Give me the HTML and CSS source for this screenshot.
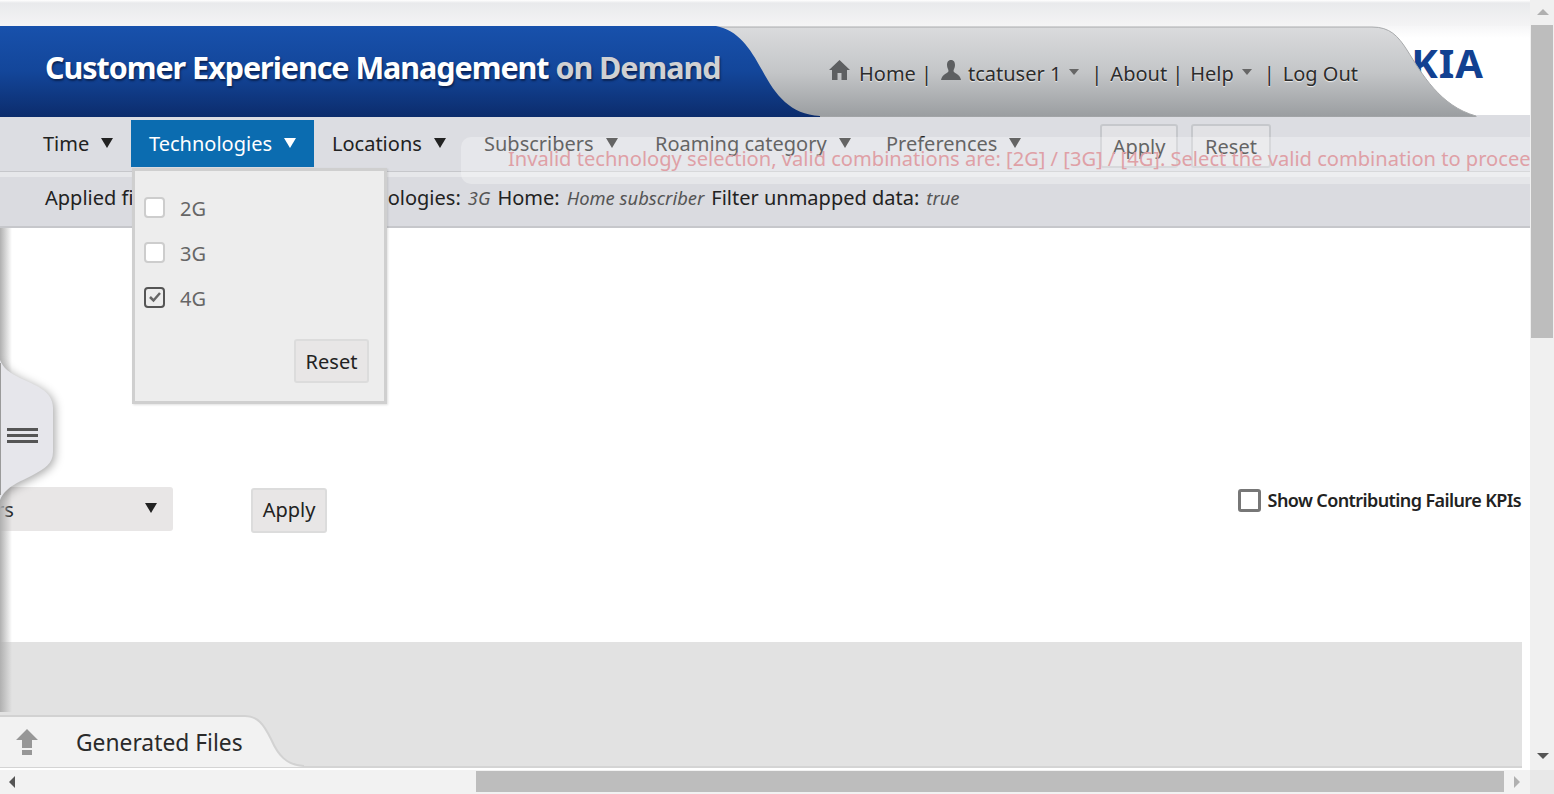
FILE: index.html
```html
<!DOCTYPE html>
<html lang="en">

<head>
    <meta charset="UTF-8">
    <title>Customer Experience Management on Demand</title>
    <link rel="stylesheet" href="styles.css">
</head>

<body>
    <div class="screen">
        <div class="page">
            <div class="top-strip"></div>

            <div class="header">
                <span class="logo">NOKIA</span>
                <svg class="header-bg" width="1530" height="91" viewBox="0 0 1530 91">
                    <defs>
                        <linearGradient id="blue" x1="0" y1="0" x2="0" y2="1">
                            <stop offset="0" stop-color="#1851ac" />
                            <stop offset="0.5" stop-color="#13469a" />
                            <stop offset="1" stop-color="#0c2c6c" />
                        </linearGradient>
                        <linearGradient id="gray" x1="0" y1="0" x2="0" y2="1">
                            <stop offset="0" stop-color="#dadbdd" />
                            <stop offset="0.5" stop-color="#c4c6c8" />
                            <stop offset="1" stop-color="#9a9da0" />
                        </linearGradient>
                    </defs>
                    <path d="M700 1 H1372 C1390 1 1398 10 1407 24 C1422 48 1440 80 1476 90 V91 H700 Z" fill="url(#gray)" stroke="#a8aaac" stroke-width="1" />
                    <path d="M0 0 H716 C738 4 750 22 762 44 C776 70 790 88 820 90 V91 H0 Z" fill="url(#blue)" />
                </svg>
                <h1 class="title">Customer Experience Management <span class="title-dim">on Demand</span></h1>
                <div class="user-menu">
                    <svg class="house" width="21" height="20" viewBox="0 0 21 20">
                        <path d="M10.5 0 L21 10 H18 V20 H12.5 V13 H8.5 V20 H3 V10 H0 Z" fill="#5d5f61" />
                    </svg>
                    <span>Home</span>
                    <span class="u-sep u-sep-a">|</span>
                    <svg class="person" width="20" height="20" viewBox="0 0 20 20">
                        <path d="M10 0 C13 0 14 2.500 14 5 C14 8 12.500 9.500 12.500 11 C12.500 13 19 14 20 20 H0 C1 14 7.500 13 7.500 11 C7.500 9.500 6 8 6 5 C6 2.500 7 0 10 0 Z" fill="#5d5f61" />
                    </svg>
                    <span>tcatuser 1</span>
                    <span class="u-caret"></span>
                    <span class="u-sep u-sep-b">|</span>
                    <span>About</span>
                    <span class="u-sep u-sep-c">|</span>
                    <span>Help</span>
                    <span class="u-caret"></span>
                    <span class="u-sep u-sep-b">|</span>
                    <span>Log Out</span>
                </div>
            </div>
            <div class="header-line"></div>

            <div class="nav">
                <div class="nav-item nav-time">Time <span class="arrow"></span></div>
                <div class="nav-item nav-active">Technologies <span class="arrow"></span></div>
                <div class="nav-item nav-loc">Locations <span class="arrow"></span></div>
                <div class="nav-item nav-sub">Subscribers <span class="arrow"></span></div>
                <div class="nav-item nav-roam">Roaming category <span class="arrow"></span></div>
                <div class="nav-item nav-pref">Preferences <span class="arrow"></span></div>
                <button class="btn nav-btn nav-apply">Apply</button>
                <button class="btn nav-btn nav-reset">Reset</button>
            </div>

            <div class="filters">
                <span class="f-label">Applied filters:</span>
                <span class="f-label f-tech">Technologies:</span>
                <em class="f-value">3G</em>
                <span class="f-label">Home:</span>
                <em class="f-value">Home subscriber</em>
                <span class="f-label">Filter unmapped data:</span>
                <em class="f-value">true</em>
            </div>

            <div class="content">
                <div class="select">
                    <span class="select-text">rs</span>
                    <span class="select-arrow"></span>
                </div>
                <button class="btn apply-btn">Apply</button>
                <label class="kpi-check">
                    <span class="kpi-box"></span>
                    Show Contributing Failure KPIs
                </label>
            </div>

            <div class="panel">
                <div class="tab">
                    <svg class="tab-bg" width="304" height="52" viewBox="0 0 304 52">
                        <path d="M-2 1 H245 C258 1 264 10 271 24 C278 40 286 50 304 51 V54 H-2 Z" fill="#f2f2f2" stroke="#d2d2d2" stroke-width="2" />
                    </svg>
                    <svg class="tab-icon" width="22" height="26" viewBox="0 0 22 26">
                        <path d="M11 0 L22 11 H16 V19 H6 V11 H0 Z M6 21 H16 V26 H6 Z" fill="#979797" />
                    </svg>
                    <span class="tab-text">Generated Files</span>
                </div>
            </div>

            <!-- left drawer -->
            <div class="drawer-shadow"></div>
            <div class="drawer">
                <svg width="70" height="150" viewBox="0 0 70 150">
                    <path d="M0 0 C3 8 10 13 20 18 C34 25 53 30 53 48 V92 C53 104 44 109 33 115 C20 122 6 126 0 140 Z" fill="#e6e6eb" />
                    <rect x="0" y="3" width="1" height="132" fill="#9a9a9a" />
                    <rect x="7" y="68" width="31" height="3" fill="#555" />
                    <rect x="7" y="74" width="31" height="3" fill="#555" />
                    <rect x="7" y="80" width="31" height="3" fill="#555" />
                </svg>
            </div>

            <!-- technologies dropdown -->
            <div class="dropdown">
                <div class="dd-row"><span class="dd-box"></span><span>2G</span></div>
                <div class="dd-row"><span class="dd-box"></span><span>3G</span></div>
                <div class="dd-row">
                    <span class="dd-box dd-checked">
                        <svg width="14" height="12" viewBox="0 0 14 12">
                            <path d="M2 6 L5.500 9.500 L12 2" fill="none" stroke="#666" stroke-width="2.500" />
                        </svg>
                    </span>
                    <span>4G</span>
                </div>
                <button class="btn dd-reset">Reset</button>
            </div>

            <!-- error message -->
            <div class="toast">Invalid technology selection, valid combinations are: [2G] / [3G] / [4G]. Select the valid combination to proceed</div>
        </div>

        <div class="vscroll">
            <span class="v-up"></span>
            <div class="v-thumb"></div>
            <span class="v-down"></span>
        </div>
        <div class="hscroll">
            <span class="h-left"></span>
            <div class="h-thumb"></div>
            <span class="h-right"></span>
        </div>
        <div class="corner"></div>
    </div>
</body>

</html>
```

FILE: styles.css
```css
* {
    box-sizing: border-box;
}

html,
body {
    margin: 0;
    height: 100%;
    overflow: hidden;
    background-color: #fff;
}

body {
    font-family: "Noto Sans", "Liberation Sans", sans-serif;
    color: #222;
}

.screen {
    display: grid;
    grid-template-columns: 1530px 24px;
    grid-template-rows: 770px 24px;
    width: 1554px;
    height: 794px;
}

.page {
    position: relative;
    display: flex;
    flex-direction: column;
    overflow: hidden;
    background-color: #fff;
}

/* top */
.top-strip {
    height: 26px;
    background: linear-gradient(#fff 0, #e9eaec 3px, #f4f4f5 100%);
}

.header {
    position: relative;
    display: flex;
    height: 89px;
    align-items: center;
    background: linear-gradient(#f6f6f7, #fff 12px);
}

.header-bg {
    position: absolute;
    top: 0;
    left: 0;
}

.logo {
    position: absolute;
    top: 15px;
    left: 1344px;
    width: 140px;
    text-align: right;
    font-size: 40px;
    line-height: 44px;
    font-weight: 700;
    color: #124191;
    letter-spacing: 1px;
}

.title {
    position: relative;
    margin: -8px 0 0 45px;
    font-size: 30.5px;
    line-height: 40px;
    font-weight: 700;
    letter-spacing: -1.05px;
    color: #fff;
    white-space: nowrap;
    text-shadow: 1px 2px 2px #0a2354;
}

.title-dim {
    color: #d0d1d3;
}

.user-menu {
    position: absolute;
    top: 29px;
    left: 829px;
    display: flex;
    align-items: center;
    height: 36px;
    font-size: 20px;
    color: #2c2c2c;
    white-space: nowrap;
    text-shadow: 0 1px 1px #eee;
}

.house {
    margin: -6px 9px 0 0;
}

.person {
    margin: -6px 7px 0 0;
}

.u-sep-a {
    margin: 0 9px 0 5px;
}

.u-sep-b {
    margin: 0 8px 0 12px;
}

.u-sep-c {
    margin: 0 7px 0 5px;
}

.u-caret {
    width: 0;
    height: 0;
    margin: -2px 0 0 8px;
    border-left: 5px solid transparent;
    border-right: 5px solid transparent;
    border-top: 6px solid #666;
}

.header-line {
    height: 2px;
    background: linear-gradient(90deg, #6f7072 0, #6f7072 830px, #c8c9cc 830px, #c8c9cc 963px, #fff 963px, #fff 1474px, #dcdde2 1474px);
}

/* nav bar */
.nav {
    position: relative;
    display: flex;
    height: 55px;
    align-items: flex-start;
    padding: 3px 0 0 25px;
    background-color: #dcdde2;
    border-bottom: 1px solid #c6c7cb;
    font-size: 20px;
}

.nav-item {
    display: flex;
    align-items: center;
    height: 47px;
    padding: 0 18px;
    white-space: nowrap;
    color: #222;
}

.arrow {
    width: 0;
    height: 0;
    margin: -1px 0 0 12px;
    border-left: 6px solid transparent;
    border-right: 6px solid transparent;
    border-top: 10px solid #222;
}

.nav-active {
    background-color: #0b6cb0;
    color: #fff;
    width: 183px;
}

.nav-active .arrow {
    border-top-color: #fff;
}

.nav-time {
    width: 106px;
}

.nav-loc {
    width: 152px;
}

.nav-sub {
    width: 171px;
}

.nav-roam {
    width: 231px;
}

.nav-pref {
    width: 225px;
}

.btn {
    font-family: inherit;
    font-size: 20px;
    color: #222;
    background-color: #e8e6e6;
    border: 2px solid #dcdcdc;
    border-radius: 3px;
    padding: 0;
}

.nav-btn {
    height: 44px;
    margin-top: 4px;
    background-color: #e2e2e5;
    border-color: #c6c8cc;
}

.nav-apply {
    width: 78px;
    margin-left: 7px;
}

.nav-reset {
    width: 80px;
    margin-left: 13px;
}

/* applied filters */
.filters {
    display: flex;
    align-items: center;
    gap: 7px;
    height: 56px;
    padding: 0 0 3px 45px;
    background: linear-gradient(#e6e7ea 0, #e6e7ea 5px, #dadbe0 5px);
    border-bottom: 2px solid #c6c7cb;
    font-size: 20px;
    white-space: nowrap;
}

/* the part before this is covered by the dropdown */
.f-tech {
    margin-left: 145px;
}

.f-value {
    font-size: 18.4px;
    color: #555;
}

/* content */
.content {
    display: flex;
    align-items: flex-start;
    height: 414px;
    padding: 259px 9px 0 0;
}

.select {
    display: flex;
    align-items: center;
    justify-content: space-between;
    width: 173px;
    height: 44px;
    padding: 0 16px 0 0;
    background-color: #e8e6e6;
    border-radius: 0 3px 3px 0;
    font-size: 20px;
}

.select-text {
    margin-left: -4px;
}

.select-arrow {
    width: 0;
    height: 0;
    margin-top: -3px;
    border-left: 6px solid transparent;
    border-right: 6px solid transparent;
    border-top: 10px solid #222;
}

.apply-btn {
    width: 76px;
    height: 45px;
    margin: 1px 0 0 78px;
    padding-bottom: 3px;
}

.kpi-check {
    display: flex;
    align-items: center;
    gap: 7px;
    margin-left: auto;
    font-size: 18px;
    font-weight: 600;
    letter-spacing: -0.6px;
    color: #222;
    white-space: nowrap;
    height: 26px;
}

.kpi-box {
    width: 23px;
    height: 23px;
    border: 3px solid #777;
    border-radius: 3px;
    background-color: #fff;
}

/* bottom panel */
.panel {
    display: flex;
    flex-direction: column;
    justify-content: flex-end;
    width: 1522px;
    height: 126px;
    background-color: #e2e2e2;
    border-bottom: 2px solid #d4d4d4;
}

.tab {
    position: relative;
    display: flex;
    align-items: center;
    height: 50px;
    padding: 2px 0 0 16px;
}

.tab-bg {
    position: absolute;
    top: -1px;
    left: 0;
}

.tab-icon,
.tab-text {
    position: relative;
}

.tab-text {
    margin-left: 38px;
    font-size: 22.8px;
    color: #2a2a2a;
}

/* left drawer */
.drawer-shadow {
    position: absolute;
    top: 228px;
    left: 0;
    width: 12px;
    height: 484px;
    background: linear-gradient(90deg, #b0b0b0, rgba(176, 176, 176, 0));
}

.drawer {
    position: absolute;
    top: 360px;
    left: 0;
    filter: drop-shadow(2px 2px 5px rgba(0, 0, 0, 0.35));
}

.drawer svg {
    display: block;
}

/* dropdown */
.dropdown {
    position: absolute;
    top: 168px;
    left: 132px;
    width: 255px;
    height: 236px;
    padding: 15px 0 0 9px;
    background-color: #ededed;
    border: 3px solid #cfcfcf;
    box-shadow: 1px 1px 2px rgba(0, 0, 0, 0.12);
    font-size: 20px;
    color: #666;
}

.dd-row {
    display: flex;
    align-items: center;
    gap: 15px;
    height: 45px;
}

.dd-box {
    display: flex;
    align-items: center;
    justify-content: center;
    width: 21px;
    height: 21px;
    margin-top: -3px;
    background-color: #fff;
    border: 2px solid #cdcdcd;
    border-radius: 4px;
}

.dd-checked {
    background-color: #ededed;
    border-color: #555;
}

.dd-reset {
    position: absolute;
    right: 15px;
    bottom: 18px;
    width: 75px;
    height: 44px;
}

/* error message */
.toast {
    position: absolute;
    top: 137px;
    left: 461px;
    width: 1069px;
    height: 47px;
    padding: 6px 0 0 47px;
    overflow: hidden;
    background-color: rgba(255, 255, 255, 0.3);
    border-radius: 10px 0 0 10px;
    font-size: 20.1px;
    line-height: 32px;
    color: #dfa0a6;
    white-space: nowrap;
}

/* scrollbars */
.vscroll {
    position: relative;
    background-color: #f0f0f0;
}

.v-thumb {
    position: absolute;
    top: 25px;
    left: 1px;
    width: 22px;
    height: 313px;
    background-color: #bdbdbd;
}

.v-up,
.v-down {
    position: absolute;
    left: 7px;
    width: 0;
    height: 0;
    border-left: 6px solid transparent;
    border-right: 6px solid transparent;
}

.v-up {
    top: 9px;
    border-bottom: 6px solid #b0b0b0;
}

.v-down {
    top: 753px;
    border-top: 6px solid #555;
}

.hscroll {
    position: relative;
    background-color: #f2f2f2;
}

.h-thumb {
    position: absolute;
    top: 1px;
    left: 476px;
    width: 1028px;
    height: 21px;
    background-color: #bdbdbd;
}

.h-left,
.h-right {
    position: absolute;
    top: 6px;
    width: 0;
    height: 0;
    border-top: 6px solid transparent;
    border-bottom: 6px solid transparent;
}

.h-left {
    left: 9px;
    border-right: 6px solid #555;
}

.h-right {
    left: 1514px;
    border-left: 6px solid #b0b0b0;
}

.corner {
    background-color: #e8e8e8;
}
```
